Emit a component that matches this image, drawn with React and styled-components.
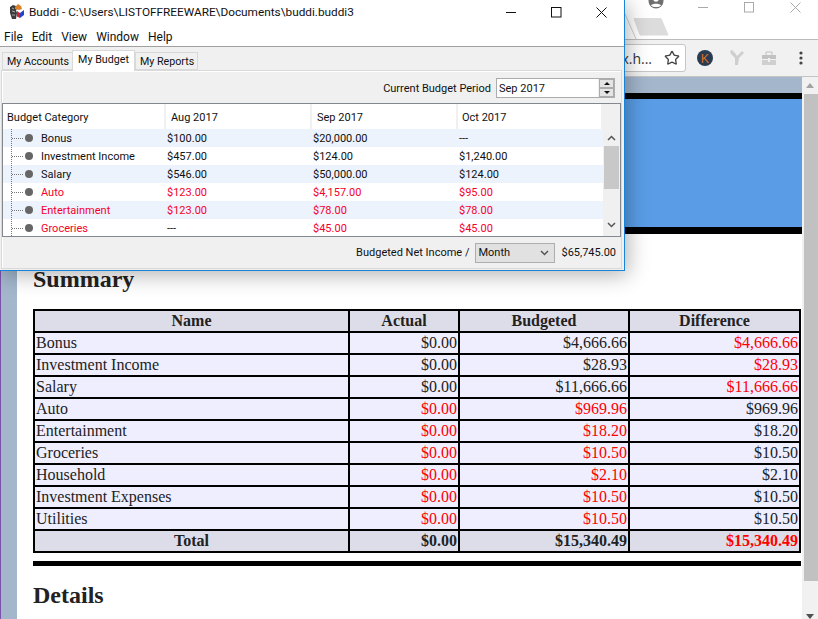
import styled, { createGlobalStyle } from "styled-components";
import { Star } from "lucide-react";

const Global = createGlobalStyle`
  html, body { margin: 0; padding: 0; background: #fff; }
  * { box-sizing: border-box; }
`;

const budgetRows = [
  { name: "Bonus", aug: "$100.00", sep: "$20,000.00", oct: "---" },
  { name: "Investment Income", aug: "$457.00", sep: "$124.00", oct: "$1,240.00" },
  { name: "Salary", aug: "$546.00", sep: "$50,000.00", oct: "$124.00" },
  { name: "Auto", aug: "$123.00", sep: "$4,157.00", oct: "$95.00", red: true },
  { name: "Entertainment", aug: "$123.00", sep: "$78.00", oct: "$78.00", red: true },
  { name: "Groceries", aug: "---", sep: "$45.00", oct: "$45.00", red: true, augPlain: true },
];

const summaryRows = [
  ["Bonus", "$0.00", "$4,666.66", "$4,666.66", 0, 0, 1],
  ["Investment Income", "$0.00", "$28.93", "$28.93", 0, 0, 1],
  ["Salary", "$0.00", "$11,666.66", "$11,666.66", 0, 0, 1],
  ["Auto", "$0.00", "$969.96", "$969.96", 1, 1, 0],
  ["Entertainment", "$0.00", "$18.20", "$18.20", 1, 1, 0],
  ["Groceries", "$0.00", "$10.50", "$10.50", 1, 1, 0],
  ["Household", "$0.00", "$2.10", "$2.10", 1, 1, 0],
  ["Investment Expenses", "$0.00", "$10.50", "$10.50", 1, 1, 0],
  ["Utilities", "$0.00", "$10.50", "$10.50", 1, 1, 0],
];

const Desktop = styled.div`
  position: relative;
  width: 818px;
  height: 619px;
  overflow: hidden;
`;

/* browser behind the app window */
const Browser = styled.div`
  display: flex;
  flex-direction: column;
  height: 100%;
`;
const BrowserTitle = styled.div`
  height: 40px;
  flex: none;
  background: #fff;
  border-bottom: 1px solid #bbb;
  display: flex;
  justify-content: flex-end;
  position: relative;
`;
const Avatar = styled.svg`
  position: absolute;
  left: 648px;
  top: -7px;
`;
const TabShape = styled.svg`
  position: absolute;
  left: 624px;
  top: 10px;
`;
const ChromeButtons = styled.div`
  display: flex;
  align-items: flex-start;
  gap: 35px;
  padding: 2px 17px 0 0;
`;
const Toolbar = styled.div`
  height: 37px;
  flex: none;
  background: #f1f1f1;
  border-bottom: 1px solid #c4c4c4;
  display: flex;
  align-items: center;
  justify-content: flex-end;
  padding-right: 1px;
`;
const Omnibox = styled.div`
  height: 28px;
  width: 120px;
  background: #fff;
  border: 1px solid #c6c6c6;
  border-radius: 3px;
  display: flex;
  align-items: center;
  justify-content: flex-end;
  padding-right: 5px;
  margin-right: 3px;
  gap: 12px;
  font: 14px "Open Sans", sans-serif;
  color: #333;
`;
const ToolSlot = styled.div`
  width: 32px;
  display: flex;
  justify-content: center;
  align-items: center;
`;
const Page = styled.div`
  flex: 1;
  min-height: 0;
  display: flex;
`;
const PageBody = styled.div`
  flex: 1;
  min-width: 0;
  background: #a3b6cc;
  border-left: 1px solid #7a52a8;
  padding: 16px 0 0 16px;
  display: flex;
`;
const Sheet = styled.div`
  flex: 1;
  background: #fff;
  font-family: "Liberation Serif", serif;
  color: #222;
`;
const Banner = styled.div`
  height: 141px;
  background: #5a9de6;
  border-top: 6px solid #000;
  border-bottom: 7px solid #000;
`;
const Section = styled.div`
  padding: 0 1px 0 16px;
`;
const Heading = styled.h2`
  margin: ${(p) => p.$top}px 0 ${(p) => p.$bottom}px;
  font-size: 24px;
  line-height: 28px;
  font-weight: bold;
`;
const SummaryTable = styled.table`
  width: 766px;
  table-layout: fixed;
  border-collapse: collapse;
  font-size: 16px;
  line-height: 20px;
`;
const Th = styled.th`
  border: 2px solid #000;
  background: #ddddea;
  padding: 0 1px;
  height: 22px;
  text-align: center;
  font-weight: bold;
`;
const Td = styled.td`
  border: 2px solid #000;
  background: #eeeeff;
  padding: 0 1px;
  height: 22px;
  text-align: ${(p) => (p.$num ? "right" : "left")};
  color: ${(p) => (p.$red ? "#f00" : "inherit")};
`;
const TotalTd = styled(Th)`
  text-align: ${(p) => (p.$num ? "right" : "center")};
  color: ${(p) => (p.$red ? "#f00" : "inherit")};
`;
const Rule = styled.div`
  height: 5px;
  margin-top: 8px;
  width: 768px;
  background: #000;
`;
const PageScroll = styled.div`
  width: 16px;
  flex: none;
  background: #f1f1f1;
  display: flex;
  flex-direction: column;
  align-items: center;
  position: relative;
`;
const ScrollThumb = styled.div`
  width: 14px;
  margin: 17px 0 0 2px;
  height: 487px;
  background: #c1c1c1;
`;
const PageArrow = styled.div`
  position: absolute;
  left: 4px;
  width: 0;
  height: 0;
  border-left: 4px solid transparent;
  border-right: 4px solid transparent;
  ${(p) => (p.$down ? "bottom: 0; border-top: 5px solid #505050;" : "top: 6px; border-bottom: 5px solid #a3a3a3;")}
`;

/* the Buddi window floats over the browser */
const Win = styled.div`
  position: absolute;
  left: 0;
  top: 0;
  width: 625px;
  height: 271px;
  background: #fff;
  border-right: 1px solid #1883d7;
  border-bottom: 1px solid #1883d7;
  box-shadow: 3px 4px 20px rgba(0, 0, 0, 0.3);
  display: flex;
  flex-direction: column;
  font-family: Roboto, sans-serif;
  color: #111;
`;
const TitleBar = styled.div`
  height: 24px;
  display: flex;
  align-items: center;
  padding-left: 9px;
  font-size: 11.8px;
  gap: 4px;
`;
const WinButtons = styled.div`
  margin-left: auto;
  display: flex;
  gap: 34px;
  padding-right: 17px;
  align-items: center;
`;
const MenuBar = styled.div`
  height: 23px;
  display: flex;
  gap: 9px;
  padding: 6px 0 0 4px;
  font-size: 12px;
  border-bottom: 1px solid #a0a0a0;
`;
const TabArea = styled.div`
  flex: 1;
  min-height: 0;
  background: #f0f0f0;
  padding: 2px 2px 1px 1px;
  display: flex;
  flex-direction: column;
  font-size: 11px;
`;
const Tabs = styled.div`
  height: 21px;
  flex: none;
  display: flex;
  align-items: flex-end;
  padding-left: 1px;
  position: relative;
  z-index: 1;
  font-size: 10.7px;
`;
const Tab = styled.div`
  height: ${(p) => (p.$on ? 21 : 18)}px;
  margin-bottom: ${(p) => (p.$on ? -1 : 0)}px;
  background: ${(p) => (p.$on ? "#fff" : "#f0f0f0")};
  border: 1px solid #d9d9d9;
  border-bottom: ${(p) => (p.$on ? "none" : "1px solid #d9d9d9")};
  margin-left: ${(p) => (p.$on ? -1 : 0)}px;
  padding: ${(p) => (p.$on ? "1px 5px 0 5px" : "1px 3px 0 4px")};
  line-height: 15px;
  white-space: nowrap;
`;
const TabPanel = styled.div`
  flex: 1;
  min-height: 0;
  border: 1px solid #d9d9d9;
  box-shadow: inset 0 1px 0 #fff, inset 1px 0 0 #fff;
  padding: 7px 0 0 0;
  display: flex;
  flex-direction: column;
`;
const PeriodRow = styled.div`
  height: 20px;
  flex: none;
  display: flex;
  align-items: center;
  justify-content: flex-end;
  gap: 5px;
  padding-right: 6px;
`;
const PeriodField = styled.div`
  width: 119px;
  height: 20px;
  background: #fff;
  border: 1px solid #acacac;
  display: flex;
  align-items: center;
  justify-content: space-between;
  padding: 0 0 0 2px;
`;
const Spinner = styled.div`
  width: 16px;
  height: 18px;
  display: flex;
  flex-direction: column;
  border-left: 1px solid #f0f0f0;
`;
const SpinButton = styled.div`
  flex: 1;
  background: #e4e4e4;
  border: 1px solid #acacac;
  display: flex;
  align-items: center;
  justify-content: center;
  &::after {
    content: "";
    border-left: 3px solid transparent;
    border-right: 3px solid transparent;
    ${(p) => (p.$down ? "border-top: 3px solid #111;" : "border-bottom: 3px solid #111;")}
  }
`;
const BudgetFrame = styled.div`
  margin: 5px 0 0 0;
  width: 619px;
  height: 134px;
  flex: none;
  background: #f0f0f0;
  border: 1px solid #828790;
  display: flex;
  flex-direction: column;
`;
const HeadRow = styled.div`
  height: 25px;
  flex: none;
  display: flex;
`;
const HeadCell = styled.div`
  width: ${(p) => p.$w}px;
  flex: none;
  background: #fff;
  border-right: 2px solid #f0f0f0;
  padding: 4px 0 0 ${(p) => p.$pad}px;
  line-height: 19px;
  white-space: nowrap;
`;
const BudgetBody = styled.div`
  flex: 1;
  min-height: 0;
  display: flex;
`;
const BudgetRows = styled.div`
  width: 600px;
  flex: none;
  position: relative;
  overflow: hidden;
`;
const TreeLine = styled.div`
  position: absolute;
  left: 8px;
  top: 0;
  bottom: 0;
  border-left: 1px dotted #777;
`;
const BudgetRow = styled.div`
  height: 18px;
  display: flex;
  align-items: center;
  background: ${(p) => (p.$alt ? "#edf3fd" : "#fff")};
  color: ${(p) => (p.$red ? "#f5002a" : "#111")};
`;
const Twig = styled.span`
  width: 11px;
  margin-left: 9px;
  flex: none;
  border-top: 1px dotted #777;
`;
const Bullet = styled.span`
  width: 8px;
  height: 8px;
  margin-left: 2px;
  flex: none;
  border-radius: 50%;
  background: #666;
`;
const CatName = styled.span`
  width: 134px;
  padding-left: 8px;
  flex: none;
  white-space: nowrap;
`;
const Amount = styled.span`
  width: 146px;
  flex: none;
  color: ${(p) => (p.$plain ? "#111" : "inherit")};
`;
const BudgetScroll = styled.div`
  width: 15px;
  margin-left: 1px;
  flex: none;
  display: flex;
  flex-direction: column;
  align-items: stretch;
`;
const ScrollArrow = styled.div`
  display: flex;
  justify-content: center;
  align-items: center;
  height: ${(p) => p.$h}px;
`;
const BudgetThumb = styled.div`
  height: 43px;
  margin-bottom: 27px;
  background: #c8c8c8;
`;
const BottomRow = styled.div`
  flex: 1;
  display: flex;
  align-items: center;
  justify-content: flex-end;
  padding-right: 5px;
`;
const MonthSelect = styled.div`
  width: 80px;
  height: 20px;
  margin: 0 6px 0 6px;
  background: #e1e1e1;
  border: 1px solid #adadad;
  display: flex;
  align-items: center;
  justify-content: space-between;
  padding: 0 5px 0 2px;
`;

const Chevron = ({ down }) => (
  <svg width="9" height="6" viewBox="0 0 9 6">
    <path d={down ? "M1 1l3.5 3.5L8 1" : "M1 5l3.5-3.5L8 5"} fill="none" stroke="#555" strokeWidth="1.5" />
  </svg>
);

const AppIcon = () => (
  <svg width="16" height="16" viewBox="0 0 16 16">
    <path d="M1 3l3-2 3 1 1 3-1 1 1 3-1 6H3L1 9z" fill="#3c3c3c" />
    <path d="M3 4l2 1M3 7l3 1M3 11l3 0" stroke="#aaa" strokeWidth="1" />
    <path d="M6 3l3-3 3 2 1 3-3 1-4-1z" fill="#d9822b" />
    <path d="M8 7l3 2v5l-3-1.500z" fill="#d8202a" />
    <path d="M11 9l4-3v5l-4 3z" fill="#2444c8" />
  </svg>
);

export default function App() {
  return (
    <Desktop>
      <Global />
      <Browser>
        <BrowserTitle>
          <Avatar width="16" height="16" viewBox="0 0 16 16">
            <circle cx="8" cy="8" r="7.5" fill="#6f6f6f" />
            <circle cx="8" cy="6" r="2.8" fill="#fff" />
            <path d="M3 12.5c1-2.500 9-2.500 10 0-2 2-8 2-10 0z" fill="#fff" />
          </Avatar>
          <TabShape width="48" height="30" viewBox="0 0 48 30">
            <path d="M1 4l11 25" stroke="#cfcfcf" fill="none" />
            <path d="M10 8.500h27l7 16.500H16z" fill="#dcdcdc" stroke="#dcdcdc" strokeLinejoin="round" />
          </TabShape>
          <ChromeButtons>
            <svg width="11" height="12" viewBox="0 0 11 12">
              <path d="M0 5.500h10" stroke="#aaa" />
            </svg>
            <svg width="11" height="12" viewBox="0 0 11 12">
              <rect x="0.500" y="0.500" width="9" height="9.500" fill="none" stroke="#aaa" />
            </svg>
            <svg width="11" height="12" viewBox="0 0 11 12">
              <path d="M0.500 0.500l10 10M10.500 0.500l-10 10" stroke="#aaa" />
            </svg>
          </ChromeButtons>
        </BrowserTitle>
        <Toolbar>
          <Omnibox>
            <span>x.h...</span>
            <Star size={16} color="#444" strokeWidth={2} />
          </Omnibox>
          <ToolSlot>
            <svg width="16" height="16" viewBox="0 0 16 16">
              <circle cx="8" cy="8" r="8" fill="#2a3d50" />
              <text x="8" y="12.500" textAnchor="middle" fontSize="12.500" fontFamily="Liberation Sans, sans-serif" fill="#d9702a">K</text>
            </svg>
          </ToolSlot>
          <ToolSlot>
            <svg width="16" height="16" viewBox="0 0 16 16">
              <path d="M1 1l2-1 3 3 2 3 5-5 2 2-5 5-1 7H6V8L2 4z" fill="#cfcfcf" />
            </svg>
          </ToolSlot>
          <ToolSlot>
            <svg width="16" height="16" viewBox="0 0 16 16">
              <path d="M1 5h14v4H1z" fill="#c2c2c2" />
              <path d="M1 10h14v5H1z" fill="#d0d0d0" />
              <path d="M5 5V2h6v3" fill="none" stroke="#c2c2c2" />
              <path d="M7 8h2v4H7z" fill="#f1f1f1" />
            </svg>
          </ToolSlot>
          <ToolSlot>
            <svg width="4" height="14" viewBox="0 0 4 14">
              <circle cx="2" cy="2" r="1.600" fill="#444" />
              <circle cx="2" cy="7" r="1.600" fill="#444" />
              <circle cx="2" cy="12" r="1.600" fill="#444" />
            </svg>
          </ToolSlot>
        </Toolbar>
        <Page>
          <PageBody>
            <Sheet>
              <Banner />
              <Section>
                <Heading $top={31} $bottom={16}>Summary</Heading>
                <SummaryTable>
                  <colgroup>
                    <col style={{ width: 315 }} />
                    <col style={{ width: 110 }} />
                    <col style={{ width: 170 }} />
                    <col style={{ width: 171 }} />
                  </colgroup>
                  <thead>
                    <tr>
                      <Th>Name</Th>
                      <Th>Actual</Th>
                      <Th>Budgeted</Th>
                      <Th>Difference</Th>
                    </tr>
                  </thead>
                  <tbody>
                    {summaryRows.map((r) => (
                      <tr key={r[0]}>
                        <Td>{r[0]}</Td>
                        <Td $num $red={r[4]}>{r[1]}</Td>
                        <Td $num $red={r[5]}>{r[2]}</Td>
                        <Td $num $red={r[6]}>{r[3]}</Td>
                      </tr>
                    ))}
                    <tr>
                      <TotalTd as="td">Total</TotalTd>
                      <TotalTd as="td" $num>$0.00</TotalTd>
                      <TotalTd as="td" $num>$15,340.49</TotalTd>
                      <TotalTd as="td" $num $red>$15,340.49</TotalTd>
                    </tr>
                  </tbody>
                </SummaryTable>
                <Rule />
                <Heading $top={15} $bottom={0}>Details</Heading>
              </Section>
            </Sheet>
          </PageBody>
          <PageScroll>
            <PageArrow />
            <ScrollThumb />
            <PageArrow $down />
          </PageScroll>
        </Page>
      </Browser>

      <Win>
        <TitleBar>
          <AppIcon />
          <span>Buddi - C:\Users\LISTOFFREEWARE\Documents\buddi.buddi3</span>
          <WinButtons>
            <svg width="11" height="11" viewBox="0 0 11 11">
              <path d="M0 5.500h10" stroke="#111" />
            </svg>
            <svg width="11" height="11" viewBox="0 0 11 11">
              <rect x="0.500" y="0.500" width="9.500" height="9.500" fill="none" stroke="#111" />
            </svg>
            <svg width="11" height="11" viewBox="0 0 11 11">
              <path d="M0.500 0.500l10 10M10.500 0.500l-10 10" stroke="#111" />
            </svg>
          </WinButtons>
        </TitleBar>
        <MenuBar>
          <span>File</span>
          <span>Edit</span>
          <span>View</span>
          <span>Window</span>
          <span>Help</span>
        </MenuBar>
        <TabArea>
          <Tabs>
            <Tab>My Accounts</Tab>
            <Tab $on>My Budget</Tab>
            <Tab>My Reports</Tab>
          </Tabs>
          <TabPanel>
            <PeriodRow>
              <span>Current Budget Period</span>
              <PeriodField>
                <span>Sep 2017</span>
                <Spinner>
                  <SpinButton />
                  <SpinButton $down />
                </Spinner>
              </PeriodField>
            </PeriodRow>
            <BudgetFrame>
              <HeadRow>
                <HeadCell $w={163} $pad={4}>Budget Category</HeadCell>
                <HeadCell $w={146} $pad={5}>Aug 2017</HeadCell>
                <HeadCell $w={146} $pad={5}>Sep 2017</HeadCell>
                <HeadCell $w={145} $pad={4}>Oct 2017</HeadCell>
              </HeadRow>
              <BudgetBody>
                <BudgetRows>
                  <TreeLine />
                  {budgetRows.map((r, i) => (
                    <BudgetRow key={r.name} $alt={i % 2 === 0} $red={r.red}>
                      <Twig />
                      <Bullet />
                      <CatName>{r.name}</CatName>
                      <Amount $plain={r.augPlain}>{r.aug}</Amount>
                      <Amount>{r.sep}</Amount>
                      <Amount>{r.oct}</Amount>
                    </BudgetRow>
                  ))}
                </BudgetRows>
                <BudgetScroll>
                  <ScrollArrow $h={17}><Chevron /></ScrollArrow>
                  <BudgetThumb />
                  <ScrollArrow $h={17}><Chevron down /></ScrollArrow>
                </BudgetScroll>
              </BudgetBody>
            </BudgetFrame>
            <BottomRow>
              <span>Budgeted Net Income /</span>
              <MonthSelect>
                <span>Month</span>
                <Chevron down />
              </MonthSelect>
              <span>$65,745.00</span>
            </BottomRow>
          </TabPanel>
        </TabArea>
      </Win>
    </Desktop>
  );
}
